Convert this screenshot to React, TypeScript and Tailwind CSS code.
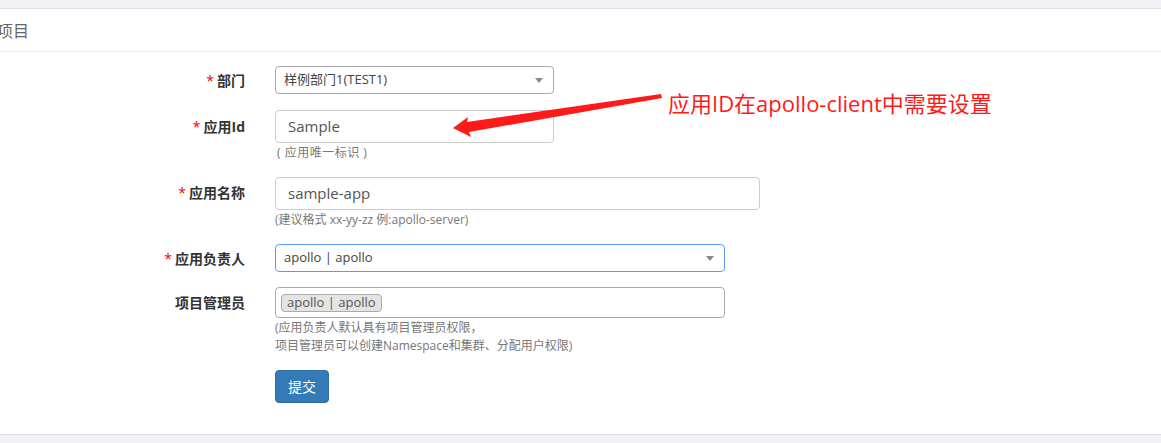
import React from "react";

const font = { fontFamily: '"Open Sans", "Noto Sans CJK SC", sans-serif' };

function Caret() {
  return (
    <span className="ml-auto mr-[2px] h-0 w-0 border-x-[4px] border-t-[5px] border-x-transparent border-t-[#888]" />
  );
}

function Label({ text, required, h }: { text: string; required?: boolean; h: string }) {
  return (
    <div className={`flex w-[245px] shrink-0 items-center justify-end text-[14px] font-bold text-[#333] ${h}`}>
      {required && <span className="mr-[3px] font-normal text-[#e00]">*</span>}
      {text}
    </div>
  );
}

export default function App() {
  return (
    <div className="h-[443px] w-full overflow-hidden bg-[#f1f2f6] pt-[8px]" style={font}>
      <div className="relative h-[427px] border-y border-[#dcdde2] bg-white">
        {/* header */}
        <div className="flex h-[43px] items-center border-b border-[#ececec] text-[16px] text-[#666]">
          <span className="-ml-[3px] pt-[2px]">项目</span>
        </div>

        <div className="pt-[14px]">
          {/* 部门 */}
          <div className="flex gap-[30px]">
            <Label text="部门" required h="h-[28px]" />
            <div className="flex h-[28px] w-[279px] items-center rounded-[4px] border border-[#aaa] pl-[8px] pr-[8px] text-[13px] text-[#444]">
              样例部门1(TEST1)
              <Caret />
            </div>
          </div>

          {/* 应用Id */}
          <div className="mt-[16px] flex gap-[30px]">
            <Label text="应用Id" required h="h-[33px]" />
            <div>
              <div className="flex h-[33px] w-[279px] items-center rounded-[4px] border border-[#ccc] px-[12px] text-[15px] text-[#555]">
                Sample
              </div>
              <div className="mt-[1px] pl-[2px] text-[12px] leading-[18px] tracking-[0.5px] text-[#777]">( 应用唯一标识 )</div>
            </div>
          </div>

          {/* 应用名称 */}
          <div className="mt-[15px] flex gap-[30px]">
            <Label text="应用名称" required h="h-[31px]" />
            <div>
              <div className="flex h-[33px] w-[485px] items-center rounded-[4px] border border-[#ccc] px-[12px] text-[15px] text-[#555]">
                sample-app
              </div>
              <div className="mt-[1px] text-[12px] leading-[18px] text-[#777]">(建议格式 xx-yy-zz 例:apollo-server)</div>
            </div>
          </div>

          {/* 应用负责人 */}
          <div className="mt-[15px] flex gap-[30px]">
            <Label text="应用负责人" required h="h-[28px]" />
            <div className="flex h-[28px] w-[450px] items-center rounded-[4px] border border-[#5897fb] pl-[8px] pr-[8px] text-[13px] text-[#444]">
              apollo | apollo
              <Caret />
            </div>
          </div>

          {/* 项目管理员 */}
          <div className="mt-[15px] flex gap-[30px]">
            <Label text="项目管理员" h="h-[30px]" />
            <div>
              <div className="flex h-[31px] w-[450px] items-center rounded-[4px] border border-[#aaa] px-[5px]">
                <span className="flex h-[18px] items-center rounded-[4px] border border-[#aaa] bg-[#e4e4e4] px-[5px] text-[13px] text-[#555]">
                  apollo | apollo
                </span>
              </div>
              <div className="mt-[1px] text-[12px] leading-[18px] text-[#777]">
                <div>(应用负责人默认具有项目管理员权限，</div>
                <div>项目管理员可以创建Namespace和集群、分配用户权限)</div>
              </div>
              <button className="mt-[15px] flex h-[33px] w-[54px] items-center justify-center rounded-[4px] border border-[#2e6da4] bg-[#337ab7] text-[14px] text-white">
                提交
              </button>
            </div>
          </div>
        </div>

        {/* annotation */}
        <svg className="pointer-events-none absolute left-0 top-0" width="1161" height="427">
          <polygon
            points="453,119 468,108 467,113 661,85 662,89 469,123 471,128"
            fill="#ff1a1a"
          />
        </svg>
        <div className="absolute left-[668px] top-[81px] text-[22px] leading-[26px] text-[#ff1a1a]">
          应用ID在apollo-client中需要设置
        </div>
      </div>
    </div>
  );
}
